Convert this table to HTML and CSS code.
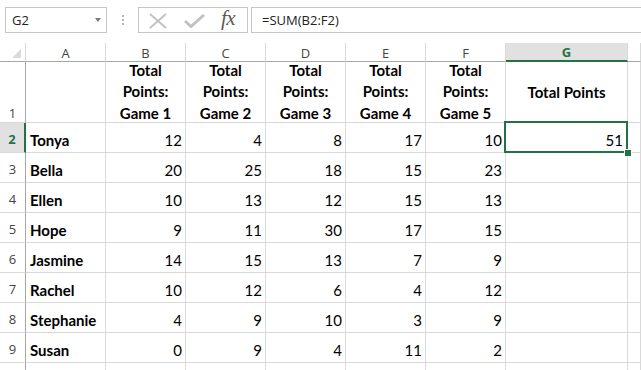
FILE: index.html
```html
<!DOCTYPE html>
<html>
<head>
<meta charset="utf-8">
<link rel="stylesheet" href="styles.css">
</head>
<body>
<div class="fbar">
  <div class="namebox"><span>G2</span><span class="caret"></span></div>
  <div class="grip"><i></i><i></i><i></i></div>
  <div class="fxbox">
    <svg class="ico-x" width="20" height="16" viewBox="0 0 20 16"><path d="M2 1 L18 15 M18 1 L2 15" stroke="#c2c2c2" stroke-width="2" fill="none"/></svg>
    <svg class="ico-ok" width="22" height="14" viewBox="0 0 22 14"><path d="M1 7 L7 12.5 L20 1" stroke="#c2c2c2" stroke-width="3" fill="none"/></svg>
    <span class="fx">fx</span>
  </div>
  <div class="formula">=SUM(B2:F2)</div>
</div>

<div class="sheet">
  <div class="ch corner"><span class="tri"></span></div>
  <div class="ch">A</div><div class="ch">B</div><div class="ch">C</div><div class="ch">D</div><div class="ch">E</div><div class="ch">F</div><div class="ch sel">G</div><div class="ch"></div>

  <div class="rh r1">1</div>
  <div class="c"></div>
  <div class="c hd"><span class="wrap">Total<br>Points:<br>Game 1</span></div>
  <div class="c hd"><span class="wrap">Total<br>Points:<br>Game 2</span></div>
  <div class="c hd"><span class="wrap">Total<br>Points:<br>Game 3</span></div>
  <div class="c hd"><span class="wrap">Total<br>Points:<br>Game 4</span></div>
  <div class="c hd"><span class="wrap">Total<br>Points:<br>Game 5</span></div>
  <div class="c hd mid">Total Points</div>
  <div class="c"></div>

  <div class="rh sel">2</div><div class="c nm">Tonya</div><div class="c n">12</div><div class="c n">4</div><div class="c n">8</div><div class="c n">17</div><div class="c n">10</div><div class="c n active">51<span class="selbox"></span><span class="handle"></span></div><div class="c"></div>
  <div class="rh">3</div><div class="c nm">Bella</div><div class="c n">20</div><div class="c n">25</div><div class="c n">18</div><div class="c n">15</div><div class="c n">23</div><div class="c"></div><div class="c"></div>
  <div class="rh">4</div><div class="c nm">Ellen</div><div class="c n">10</div><div class="c n">13</div><div class="c n">12</div><div class="c n">15</div><div class="c n">13</div><div class="c"></div><div class="c"></div>
  <div class="rh">5</div><div class="c nm">Hope</div><div class="c n">9</div><div class="c n">11</div><div class="c n">30</div><div class="c n">17</div><div class="c n">15</div><div class="c"></div><div class="c"></div>
  <div class="rh">6</div><div class="c nm">Jasmine</div><div class="c n">14</div><div class="c n">15</div><div class="c n">13</div><div class="c n">7</div><div class="c n">9</div><div class="c"></div><div class="c"></div>
  <div class="rh">7</div><div class="c nm">Rachel</div><div class="c n">10</div><div class="c n">12</div><div class="c n">6</div><div class="c n">4</div><div class="c n">12</div><div class="c"></div><div class="c"></div>
  <div class="rh">8</div><div class="c nm">Stephanie</div><div class="c n">4</div><div class="c n">9</div><div class="c n">10</div><div class="c n">3</div><div class="c n">9</div><div class="c"></div><div class="c"></div>
  <div class="rh">9</div><div class="c nm">Susan</div><div class="c n">0</div><div class="c n">9</div><div class="c n">4</div><div class="c n">11</div><div class="c n">2</div><div class="c"></div><div class="c"></div>
  <div class="rh last"></div><div class="c last"></div><div class="c last"></div><div class="c last"></div><div class="c last"></div><div class="c last"></div><div class="c last"></div><div class="c last"></div><div class="c last"></div>
</div>
</body>
</html>
```
FILE: styles.css
```css
* { box-sizing: border-box; }
html, body { margin: 0; padding: 0; background: #fff; overflow: hidden; }
body { width: 641px; height: 370px; font-family: "Open Sans", "Noto Sans", sans-serif; color: #000; }

.fbar {
  display: flex;
  align-items: flex-start;
  padding: 7px 0 0 5px;
  height: 43px;
}
.namebox {
  width: 102px; height: 26px;
  border: 1px solid #c6c6c6;
  display: flex; align-items: center; justify-content: space-between;
  padding: 0 5px 0 6px;
  font-size: 13px; color: #222;
}
.caret {
  width: 0; height: 0;
  border-left: 3.5px solid transparent;
  border-right: 3.5px solid transparent;
  border-top: 4px solid #7a7a7a;
}
.grip {
  width: 31px; height: 26px;
  display: flex; flex-direction: column; align-items: center; justify-content: center; gap: 2px;
}
.grip i { display: block; width: 2px; height: 2px; background: #b5b5b5; }
.fxbox {
  width: 110px; height: 26px;
  border: 1px solid #c6c6c6;
  display: flex; align-items: center;
  padding-left: 9px;
}
.ico-x { margin-top: 1px; }
.ico-ok { margin-left: 16px; margin-top: 2px; }
.fx {
  margin-left: 15px;
  font-family: "Liberation Serif", "DejaVu Serif", serif;
  font-style: italic; font-size: 21px; color: #5a5a5a;
  letter-spacing: -0.5px;
  line-height: 1;
  margin-top: -3px;
}
.formula {
  flex: 1; height: 26px;
  margin-left: 3px;
  border: 1px solid #c6c6c6; border-right: none;
  font-size: 13px; color: #222;
  padding: 3px 0 0 10px;
}

.sheet {
  display: grid;
  grid-template-columns: 26px repeat(6, 80px) 122px 1fr;
  grid-template-rows: 19px 61px repeat(8, 30px) 8px;
  font-family: "Lato", sans-serif;
}
.ch {
  border-right: 1px solid #d9d9d9;
  border-bottom: 1px solid #a6a6a6;
  display: flex; align-items: center; justify-content: center;
  font-family: "Open Sans", sans-serif;
  font-size: 13px; color: #444;
  padding-top: 1px;
}
.ch.corner { position: relative; }
.tri {
  position: absolute; right: 4px; bottom: 3px;
  width: 0; height: 0;
  border-left: 9px solid transparent;
  border-bottom: 9px solid #dadada;
}
.ch.sel {
  background: #e1e1e1;
  border-bottom: 2px solid #217346;
  color: #217346; font-weight: 700;
}
.rh {
  border-right: 1px solid #a6a6a6;
  border-bottom: 1px solid #d9d9d9;
  display: flex; align-items: center; justify-content: center;
  font-family: "Open Sans", sans-serif;
  font-size: 13px; color: #444;
  padding-top: 3px;
}
.rh.r1 { align-items: flex-end; padding-bottom: 0; }
.rh.sel {
  background: #e1e1e1;
  border-right: 2px solid #217346;
  color: #217346; font-weight: 700;
}
.rh.last, .c.last { border-bottom: none; padding: 0; }
.c {
  border-right: 1px solid #d9d9d9;
  border-bottom: 1px solid #d9d9d9;
  display: flex; align-items: center;
  font-size: 15px;
  position: relative;
  padding-top: 4px;
}
.hd {
  font-weight: 700;
  justify-content: center; text-align: center;
  align-items: flex-end;
  line-height: 21.5px;
  padding-top: 0;
}
.hd .wrap { margin-bottom: -2px; }
.hd.mid { align-items: center; padding-top: 1px; }
.nm { font-weight: 700; padding-left: 4px; }
.n { justify-content: flex-end; padding-right: 3px; }
.n.active { padding-right: 4px; z-index: 2; }
.selbox {
  position: absolute;
  top: -2px; left: -2px; right: -1px; bottom: -1px;
  border: 2px solid #217346;
  pointer-events: none;
}
.handle {
  position: absolute;
  right: -5px; bottom: -5px;
  width: 8px; height: 8px;
  background: #217346;
  border: 1px solid #fff;
  border-top-width: 1px;
}
```
